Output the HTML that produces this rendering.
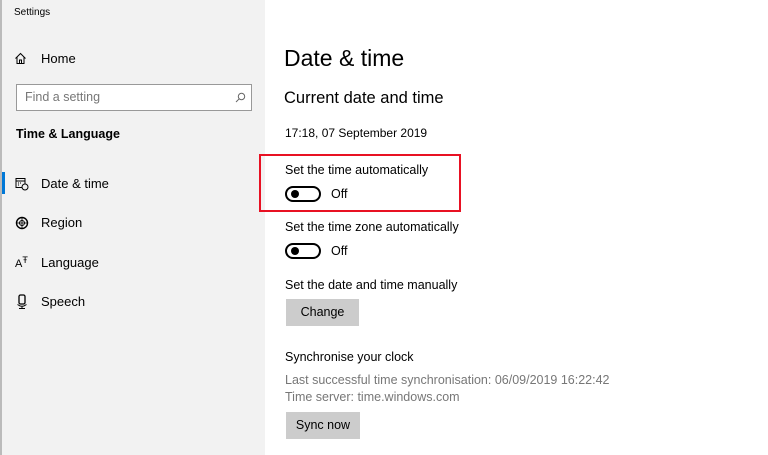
<!DOCTYPE html>
<html><head><style>
body{margin:0;width:768px;height:455px;overflow:hidden;background:#fff;font-family:"Liberation Sans",sans-serif;color:#000;position:relative}
.a{position:absolute;white-space:nowrap;line-height:1}
#side{position:absolute;left:0;top:0;width:265px;height:455px;background:#f2f2f2;border-left:2px solid #bbb;box-sizing:border-box}
.tog{position:absolute;width:32px;height:12px;border:2px solid #000;border-radius:8px}
.tog:after{content:"";position:absolute;left:4px;top:2px;width:8px;height:8px;border-radius:50%;background:#000}
.btn{position:absolute;background:#ccc;font-size:12.5px;text-align:center;line-height:27px}
</style></head><body>
<div id="side"></div>
<div class="a" style="left:14px;top:8px;font-size:10px">Settings</div>
<svg class="a" style="left:14px;top:52px" width="13" height="13" viewBox="0 0 13 13"><path d="M1.5 6.5L6.5 1.5L11.5 6.5M3 5v6.5h7V5M5.5 11.5V8h2v3.5" fill="none" stroke="#000" stroke-width="1"/></svg>
<div class="a" style="left:41px;top:52px;font-size:13px">Home</div>
<div class="a" style="left:16px;top:84px;width:236px;height:27px;border:1px solid #999;box-sizing:border-box;background:#fff"></div>
<div class="a" style="left:25px;top:91px;font-size:12.5px;color:#777">Find a setting</div>
<svg class="a" style="left:235px;top:92px" width="11" height="11" viewBox="0 0 11 11"><circle cx="6.5" cy="4.5" r="3.2" fill="none" stroke="#666"/><path d="M4.2 6.8L1 10" stroke="#666"/></svg>
<div class="a" style="left:16px;top:128px;font-size:12.5px;font-weight:bold">Time &amp; Language</div>
<div class="a" style="left:2px;top:172px;width:3px;height:22px;background:#0078d7"></div>
<svg class="a" style="left:15px;top:177px" width="14" height="14" viewBox="0 0 14 14"><rect x="1" y="1.5" width="9" height="9" fill="none" stroke="#000"/><path d="M1 4h9M3 6h1M5 6h1M3 8h1" stroke="#000"/><circle cx="10" cy="10" r="3" fill="#f2f2f2" stroke="#000"/></svg>
<div class="a" style="left:41px;top:177px;font-size:13px">Date &amp; time</div>
<svg class="a" style="left:15px;top:216px" width="14" height="14" viewBox="0 0 14 14"><circle cx="7" cy="7" r="5.5" fill="none" stroke="#000" stroke-width="1.4"/><circle cx="7" cy="7" r="2.5" fill="none" stroke="#000"/><path d="M2 7h10M7 1.5v11" stroke="#000" stroke-width=".8"/></svg>
<div class="a" style="left:41px;top:216px;font-size:13px">Region</div>
<div class="a" style="left:15px;top:256px;font-size:11px">A<span style="font-size:9px;vertical-align:4px">Ŧ</span></div>
<div class="a" style="left:41px;top:256px;font-size:13px">Language</div>
<svg class="a" style="left:16px;top:294px" width="12" height="15" viewBox="0 0 12 15"><rect x="3" y="1" width="6" height="9" rx="1.5" fill="none" stroke="#000" stroke-width="1.3"/><path d="M1.5 10.5Q6 14 10.5 10.5M6 12v2.5M3 14.5h6" fill="none" stroke="#000"/></svg>
<div class="a" style="left:41px;top:295px;font-size:13px">Speech</div>

<div class="a" style="left:284px;top:47px;font-size:23px">Date &amp; time</div>
<div class="a" style="left:284px;top:90px;font-size:16.5px">Current date and time</div>
<div class="a" style="left:285px;top:127px;font-size:12px">17:18, 07 September 2019</div>
<div class="a" style="left:259px;top:154px;width:202px;height:58px;border:2px solid #e81123;box-sizing:border-box"></div>
<div class="a" style="left:285px;top:164px;font-size:12.5px">Set the time automatically</div>
<div class="tog" style="left:285px;top:186px"></div>
<div class="a" style="left:331px;top:188px;font-size:12.5px">Off</div>
<div class="a" style="left:285px;top:221px;font-size:12.5px">Set the time zone automatically</div>
<div class="tog" style="left:285px;top:243px"></div>
<div class="a" style="left:331px;top:245px;font-size:12.5px">Off</div>
<div class="a" style="left:285px;top:279px;font-size:12.5px">Set the date and time manually</div>
<div class="btn" style="left:286px;top:299px;width:73px;height:27px">Change</div>
<div class="a" style="left:285px;top:351px;font-size:12.5px">Synchronise your clock</div>
<div class="a" style="left:285px;top:374px;font-size:12.5px;color:#777">Last successful time synchronisation: 06/09/2019 16:22:42</div>
<div class="a" style="left:285px;top:391px;font-size:12.5px;color:#777">Time server: time.windows.com</div>
<div class="btn" style="left:286px;top:412px;width:74px;height:27px">Sync now</div>
</body></html>
